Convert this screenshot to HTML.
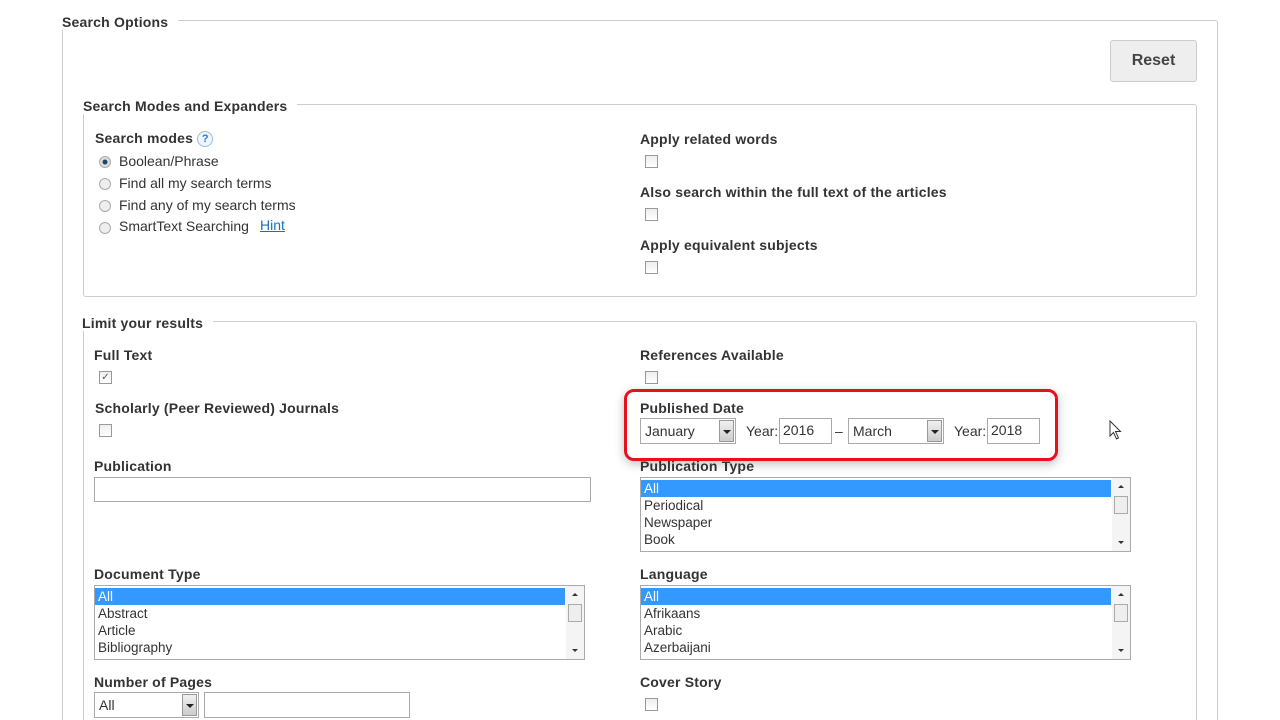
<!DOCTYPE html><html><head><style>
html,body{margin:0;width:1280px;height:720px;overflow:hidden}
body{background:#fff;font-family:"Liberation Sans",Arial,sans-serif;color:#333;position:relative}
.a{position:absolute}
.b{font-weight:bold;font-size:14px;color:#333;letter-spacing:0.2px}
.t{font-size:14px;color:#333}
.fs{position:absolute;border:1px solid #ccc;border-radius:3px}
.lg{position:absolute;background:#fff;padding-right:10px;font-weight:bold;font-size:14px;color:#333;letter-spacing:0.2px}
.cb{position:absolute;width:11px;height:11px;border:1px solid #999;background:linear-gradient(#eee,#fff)}
.rd{position:absolute;width:10px;height:10px;border:1px solid #aaa;border-radius:50%;background:#eee}
.lb{position:absolute;border:1px solid #aaa;background:#fff;font-size:13.5px;line-height:17px;overflow:hidden}
.lb p{margin:0;padding-left:3px;height:17px}
.lb .s{background:#3399ff;color:#fff;margin:2px 19px 0 0}
.sb{position:absolute;right:0;top:0;bottom:0;width:18px;background:#f4f4f4}
.sb i{position:absolute;left:6px;border:3px solid transparent;width:0;height:0}
.th{position:absolute;left:2px;top:18px;width:12px;height:16px;border:1px solid #aaa;background:#eee}
.sel{position:absolute;border:1px solid #aaa;background:#fff;font-size:14px;line-height:24px;padding-left:4px;box-sizing:border-box;height:26px}
.ar{position:absolute;right:1px;top:1px;width:15px;height:22px;border:1px solid #999;background:linear-gradient(#f0f0f0,#ccc);box-sizing:border-box}
.ar:after{content:"";position:absolute;left:3px;top:9px;border:4px solid transparent;border-top:4px solid #222}
.in{position:absolute;border:1px solid #aaa;background:#fff;box-sizing:border-box;font-size:14px;padding-left:3px;line-height:22px}
</style></head><body>
<div class="fs" style="left:62px;top:20px;width:1154px;height:720px"></div>
<div class="lg" style="left:62px;top:14px">Search Options</div>
<div class="a" style="left:1110px;top:40px;width:85px;height:40px;border:1px solid #ccc;border-radius:3px;background:#eee;font-weight:bold;font-size:16px;text-align:center;line-height:40px;color:#444">Reset</div>

<div class="fs" style="left:83px;top:104px;width:1112px;height:191px"></div>
<div class="lg" style="left:83px;top:98px">Search Modes and Expanders</div>
<div class="a b" style="left:95px;top:130px">Search modes <span style="display:inline-block;width:14px;height:14px;border:1px solid #9bd;border-radius:50%;font-size:11px;text-align:center;line-height:14px;color:#37c;background:#eef6ff;vertical-align:1px;letter-spacing:0">?</span></div>
<div class="rd" style="left:99px;top:156px;background:radial-gradient(#246 30%,#ddd 40%)"></div>
<div class="a t" style="left:119px;top:153px">Boolean/Phrase</div>
<div class="rd" style="left:99px;top:178px"></div><div class="a t" style="left:119px;top:175px">Find all my search terms</div>
<div class="rd" style="left:99px;top:200px"></div><div class="a t" style="left:119px;top:197px">Find any of my search terms</div>
<div class="rd" style="left:99px;top:222px"></div><div class="a t" style="left:119px;top:218px">SmartText Searching</div>
<div class="a t" style="left:260px;top:217px;color:#1a6fc4;text-decoration:underline">Hint</div>
<div class="a b" style="left:640px;top:131px">Apply related words</div><div class="cb" style="left:645px;top:155px"></div>
<div class="a b" style="left:640px;top:184px">Also search within the full text of the articles</div><div class="cb" style="left:645px;top:208px"></div>
<div class="a b" style="left:640px;top:237px">Apply equivalent subjects</div><div class="cb" style="left:645px;top:261px"></div>

<div class="fs" style="left:83px;top:321px;width:1112px;height:420px"></div>
<div class="lg" style="left:82px;top:315px">Limit your results</div>
<div class="a b" style="left:94px;top:347px">Full Text</div>
<div class="cb" style="left:99px;top:371px;font-size:10px;line-height:11px;text-align:center;color:#556">✓</div>
<div class="a b" style="left:640px;top:347px">References Available</div><div class="cb" style="left:645px;top:371px"></div>
<div class="a b" style="left:95px;top:400px">Scholarly (Peer Reviewed) Journals</div><div class="cb" style="left:99px;top:424px"></div>

<div class="a" style="left:624px;top:389px;width:428px;height:66px;border:3px solid #e8101a;border-radius:10px;box-shadow:0 3px 10px rgba(0,0,0,.25)"></div>
<div class="a b" style="left:640px;top:400px">Published Date</div>
<div class="sel" style="left:640px;top:418px;width:96px">January<div class="ar"></div></div>
<div class="a t" style="left:746px;top:423px">Year:</div>
<div class="in" style="left:779px;top:418px;width:53px;height:26px">2016</div>
<div class="a t" style="left:835px;top:423px">–</div>
<div class="sel" style="left:848px;top:418px;width:96px">March<div class="ar"></div></div>
<div class="a t" style="left:954px;top:423px">Year:</div>
<div class="in" style="left:987px;top:418px;width:53px;height:26px">2018</div>
<svg class="a" style="left:1109px;top:420px" width="14" height="20" viewBox="0 0 14 20"><path d="M1 1 L1 16 L4.5 12.5 L7.5 19 L9.5 18 L6.5 11.5 L11.5 11.5 Z" fill="#fff" stroke="#333" stroke-width="1"/></svg>

<div class="a b" style="left:94px;top:458px">Publication</div>
<div class="in" style="left:94px;top:477px;width:497px;height:25px"></div>
<div class="a b" style="left:640px;top:458px">Publication Type</div>
<div class="lb" style="left:640px;top:477px;width:489px;height:73px"><p class="s">All</p><p>Periodical</p><p>Newspaper</p><p>Book</p><div class="sb"><i style="top:4px;border-bottom-color:#333"></i><div class="th"></div><i style="bottom:4px;border-top-color:#333"></i></div></div>

<div class="a b" style="left:94px;top:566px">Document Type</div>
<div class="lb" style="left:94px;top:585px;width:489px;height:73px"><p class="s">All</p><p>Abstract</p><p>Article</p><p>Bibliography</p><div class="sb"><i style="top:4px;border-bottom-color:#333"></i><div class="th"></div><i style="bottom:4px;border-top-color:#333"></i></div></div>
<div class="a b" style="left:640px;top:566px">Language</div>
<div class="lb" style="left:640px;top:585px;width:489px;height:73px"><p class="s">All</p><p>Afrikaans</p><p>Arabic</p><p>Azerbaijani</p><div class="sb"><i style="top:4px;border-bottom-color:#333"></i><div class="th"></div><i style="bottom:4px;border-top-color:#333"></i></div></div>

<div class="a b" style="left:94px;top:674px">Number of Pages</div>
<div class="sel" style="left:94px;top:692px;width:105px">All<div class="ar"></div></div>
<div class="in" style="left:204px;top:692px;width:206px;height:26px"></div>
<div class="a b" style="left:640px;top:674px">Cover Story</div><div class="cb" style="left:645px;top:698px"></div>
</body></html>
